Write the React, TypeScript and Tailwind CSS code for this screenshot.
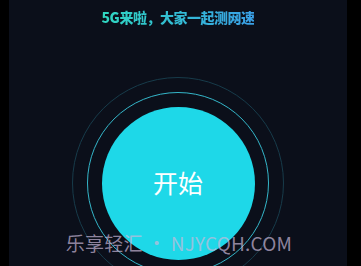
export default function App() {
  return (
    <div className="flex h-[266px] w-[361px] bg-black">
      <div className="relative ml-[9px] flex h-[266px] w-[338px] flex-col items-center overflow-hidden bg-[#0b0f1a]">
        <h1
          className="mt-[7px] bg-gradient-to-r from-[#30d6c0] to-[#3a9fe6] bg-clip-text text-[14px] font-black leading-[20px] tracking-[-0.5px] text-transparent"
          style={{ fontFamily: '"Noto Sans CJK SC", sans-serif' }}
        >
          5G来啦，大家一起测网速
        </h1>

        <div className="mt-[50px] flex h-[212px] w-[212px] shrink-0 items-center justify-center rounded-full border border-[#173b4a]">
          <div className="flex h-[182px] w-[182px] items-center justify-center rounded-full border border-[#34b6c9]">
            <button
              type="button"
              className="flex h-[153px] w-[153px] items-center justify-center rounded-full bg-[#1ed8e8] text-[25px] text-white"
              style={{ fontFamily: '"Noto Sans CJK SC", sans-serif' }}
            >
              开始
            </button>
          </div>
        </div>

        <div
          className="absolute left-0 top-[229px] w-full pl-[2px] text-center text-[19px] font-normal leading-[28px] tracking-[0.2px] text-[#c9b8d8]/70"
          style={{ fontFamily: '"Noto Sans CJK SC", sans-serif' }}
        >
          乐享轻汇 • NJYCQH.COM
        </div>
      </div>
    </div>
  );
}
